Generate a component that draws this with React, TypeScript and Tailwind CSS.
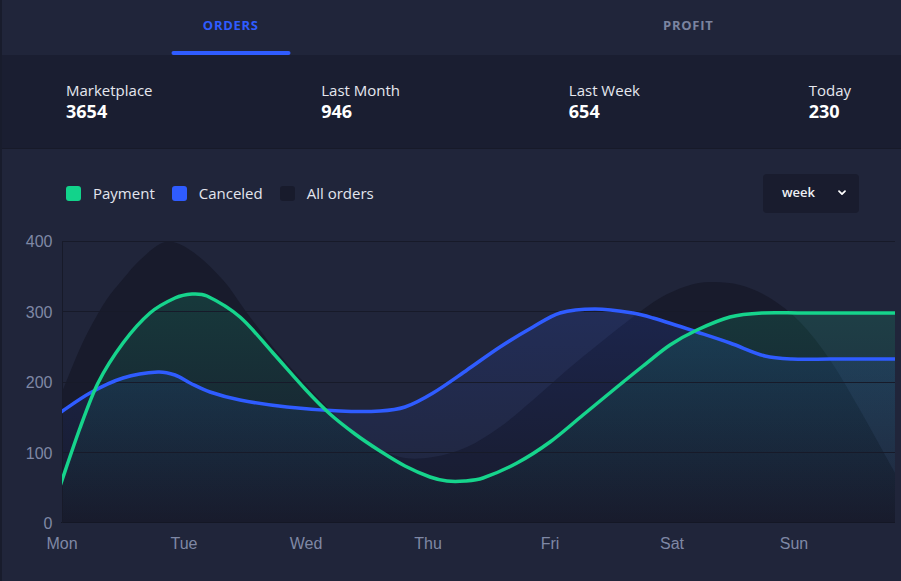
import React from "react";

type Pt = [number, number];

// Hermite spline with finite-difference tangents (handles uneven spacing smoothly)
const smooth = (pts: Pt[]): string => {
  const n = pts.length;
  const m: number[] = pts.map((p, i) => {
    if (i === 0) return (pts[1][1] - p[1]) / (pts[1][0] - p[0]);
    if (i === n - 1) return (p[1] - pts[i - 1][1]) / (p[0] - pts[i - 1][0]);
    return (pts[i + 1][1] - pts[i - 1][1]) / (pts[i + 1][0] - pts[i - 1][0]);
  });
  let d = `M${pts[0][0]},${pts[0][1]}`;
  for (let i = 0; i < n - 1; i++) {
    const [x1, y1] = pts[i];
    const [x2, y2] = pts[i + 1];
    const h = (x2 - x1) / 3;
    d += ` C${(x1 + h).toFixed(1)},${(y1 + m[i] * h).toFixed(1)} ${(x2 - h).toFixed(1)},${(y2 - m[i + 1] * h).toFixed(1)} ${x2},${y2}`;
  }
  return d;
};

const area = (pts: Pt[]): string =>
  `${smooth(pts)} L${pts[pts.length - 1][0]},523 L${pts[0][0]},523 Z`;

const green: Pt[] = [
  [58, 492], [80, 428], [98, 383], [123, 343], [150, 313], [175, 298], [192, 294], [207, 296],
  [240, 317], [273, 353], [306, 390], [330, 414], [355, 434], [380, 451], [405, 466],
  [430, 477], [447, 481], [465, 481], [483, 478], [517, 463], [550, 442], [583, 415],
  [617, 387], [643, 366], [670, 345], [697, 330], [730, 317], [762, 313], [800, 313], [900, 313],
];

const blue: Pt[] = [
  [58, 414], [90, 393], [123, 378], [158, 372], [175, 375], [190, 383], [210, 392], [240, 400],
  [287, 407], [340, 411], [380, 411], [405, 407], [433, 393], [467, 370], [500, 347],
  [533, 327], [560, 313], [595, 309], [633, 313], [653, 318], [697, 332],
  [730, 343], [765, 356], [792, 359], [830, 359], [900, 359],
];

const dark: Pt[] = [
  [62, 392], [78, 353], [90, 328], [107, 299], [123, 279], [140, 260], [165, 242], [190, 250],
  [223, 280], [247, 313], [273, 347], [300, 378], [330, 410], [363, 440], [400, 457],
  [433, 457], [467, 447], [500, 427], [533, 400], [567, 370], [600, 343], [633, 317],
  [660, 298], [687, 286], [710, 282], [740, 285], [770, 298], [800, 322], [830, 360], [860, 410],
  [895, 473],
];

const days = ["Mon", "Tue", "Wed", "Thu", "Fri", "Sat", "Sun"];
const yTicks: [string, number][] = [
  ["400", 241],
  ["300", 311.5],
  ["200", 382],
  ["100", 452.5],
  ["0", 523],
];

const stats = [
  { label: "Marketplace", value: "3654" },
  { label: "Last Month", value: "946" },
  { label: "Last Week", value: "654" },
  { label: "Today", value: "230" },
];

const Legend = ({ color, label }: { color: string; label: string }) => (
  <div className="flex items-center gap-[12px]">
    <span className={`block h-[15px] w-[15px] rounded-[3px] ${color}`} />
    <span className="text-[15px] leading-5 text-[#e3e6ee]">{label}</span>
  </div>
);

export default function App() {
  return (
    <div
      className="h-[581px] w-[901px] overflow-hidden bg-[#20253a]"
      style={{ fontFamily: '"Open Sans", "Noto Sans", sans-serif' }}
    >
      <div className="h-[581px] w-[917px] border-l-2 border-[#181c2c]">
        {/* Tabs */}
        <div className="flex h-[55px]">
          <div className="relative flex flex-1 items-center justify-center pb-[3px]">
            <span className="text-[13px] font-bold tracking-[0.7px] text-[#2f5cff]">ORDERS</span>
            <span className="absolute bottom-0 left-1/2 h-[4px] w-[119px] -translate-x-1/2 rounded-full bg-[#2f5cff]" />
          </div>
          <div className="flex flex-1 items-center justify-center pb-[3px]">
            <span className="text-[13px] font-bold tracking-[0.7px] text-[#7b84a0]">PROFIT</span>
          </div>
        </div>

        {/* Stats */}
        <div className="flex h-[94px] items-center justify-between border-b border-[#171a29] bg-[#1a1e31] pl-[64px] pr-[66px]">
          {stats.map((s) => (
            <div key={s.label} className="flex flex-col">
              <span className="text-[15px] leading-5 text-[#e6e8ef]">{s.label}</span>
              <span className="-mt-px text-[18px] font-bold leading-6 text-white">{s.value}</span>
            </div>
          ))}
        </div>

        {/* Legend row */}
        <div className="mt-[24px] flex h-[40px] items-center justify-between pl-[64px] pr-[58px]">
          <div className="flex items-center gap-[17px]">
            <Legend color="bg-[#12d38b]" label="Payment" />
            <Legend color="bg-[#2f5cff]" label="Canceled" />
            <Legend color="bg-[#181b2c]" label="All orders" />
          </div>
          <div className="flex h-[39px] w-[96px] items-center justify-between rounded-[4px] bg-[#191c2e] pl-[19px] pr-[13px]">
            <span className="text-[13px] font-semibold text-[#eef0f5]">week</span>
            <svg width="8" height="6" viewBox="0 0 8 6" fill="none">
              <path d="M1 1.2 L4 4.2 L7 1.2" stroke="#ffffff" strokeWidth="1.7" strokeLinecap="round" strokeLinejoin="round" />
            </svg>
          </div>
        </div>

        {/* Chart */}
        <svg className="mt-[17px] block" width="915" height="351" viewBox="2 230 915 351">
          <defs>
            <linearGradient id="gGreen" gradientUnits="userSpaceOnUse" x1="0" y1="241" x2="0" y2="523">
              <stop offset="0" stopColor="#12d38b" stopOpacity="0.2" />
              <stop offset="1" stopColor="#12d38b" stopOpacity="0" />
            </linearGradient>
            <linearGradient id="gBlue" gradientUnits="userSpaceOnUse" x1="0" y1="241" x2="0" y2="523">
              <stop offset="0" stopColor="#2f5cff" stopOpacity="0.2" />
              <stop offset="1" stopColor="#2f5cff" stopOpacity="0" />
            </linearGradient>
            <clipPath id="plot">
              <rect x="62" y="225" width="833" height="298" />
            </clipPath>
          </defs>

          <g clipPath="url(#plot)">
            <path d={area(dark)} fill="#181b2c" />
            <path d={area(blue)} fill="url(#gBlue)" />
            <path d={area(green)} fill="url(#gGreen)" />
          </g>

          {[241.5, 311.5, 382.5, 452.5].map((y) => (
            <line key={y} x1="62" x2="895" y1={y} y2={y} stroke="#171a29" strokeWidth="1" />
          ))}
          <line x1="61" x2="895" y1="522.5" y2="522.5" stroke="#141725" strokeWidth="1" />
          <line x1="62.5" x2="62.5" y1="241" y2="523" stroke="#171a29" strokeWidth="1" />

          <g clipPath="url(#plot)">
            <path d={smooth(blue)} fill="none" stroke="#2f5cff" strokeWidth="3.5" strokeLinejoin="round" />
            <path d={smooth(green)} fill="none" stroke="#16d48c" strokeWidth="3.5" strokeLinejoin="round" />
          </g>

          <g style={{ fontFamily: '"Liberation Sans", Arial, sans-serif' }} fontSize="16" fill="#7f88a5">
            {yTicks.map(([t, y]) => (
              <text key={t} x="52.5" y={y + 6} textAnchor="end">
                {t}
              </text>
            ))}
            {days.map((d, i) => (
              <text key={d} x={62 + i * 122} y="549" textAnchor="middle">
                {d}
              </text>
            ))}
          </g>
        </svg>
      </div>
    </div>
  );
}
